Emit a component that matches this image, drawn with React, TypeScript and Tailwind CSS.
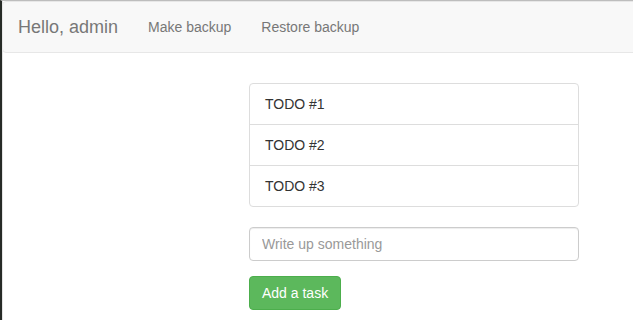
export default function App() {
  return (
    <div
      className="h-[320px] w-full overflow-hidden border-l-2 border-t border-l-[#272b27] border-t-[#bdbdbd] bg-white text-[14px] text-[#333]"
      style={{ fontFamily: '"Liberation Sans", Arial, Helvetica, sans-serif' }}
    >
      <div className="h-full border-l border-l-[#e4e4e4]">
        <nav className="ml-[-1px] mr-[-8px] flex h-[52px] items-center rounded-[4px] border border-[#e7e7e7] bg-[#f8f8f8]">
          <span className="px-[15px] text-[18px] leading-[20px] text-[#777]">Hello, admin</span>
          <a className="px-[15px] leading-[20px] text-[#777]">Make backup</a>
          <a className="px-[15px] leading-[20px] text-[#777]">Restore backup</a>
        </nav>
        <div className="ml-[246px] mt-[30px] w-[330px]">
          <ul className="overflow-hidden rounded-[4px] border border-[#ddd]">
            {["TODO #1", "TODO #2", "TODO #3"].map((t, i) => (
              <li
                key={t}
                className={`px-[15px] py-[10px] leading-[20px] ${i > 0 ? "border-t border-[#ddd]" : ""}`}
              >
                {t}
              </li>
            ))}
          </ul>
          <input
            className="mt-[20px] block h-[34px] w-full rounded-[4px] border border-[#ccc] px-[12px] text-[14px] text-[#555] placeholder:text-[#999] shadow-[inset_0_1px_1px_rgba(0,0,0,0.075)] outline-none"
            placeholder="Write up something"
          />
          <button className="mt-[15px] h-[34px] rounded-[4px] border border-[#4cae4c] bg-[#5cb85c] px-[12px] text-[14px] leading-[20px] text-white">
            Add a task
          </button>
        </div>
      </div>
    </div>
  );
}
